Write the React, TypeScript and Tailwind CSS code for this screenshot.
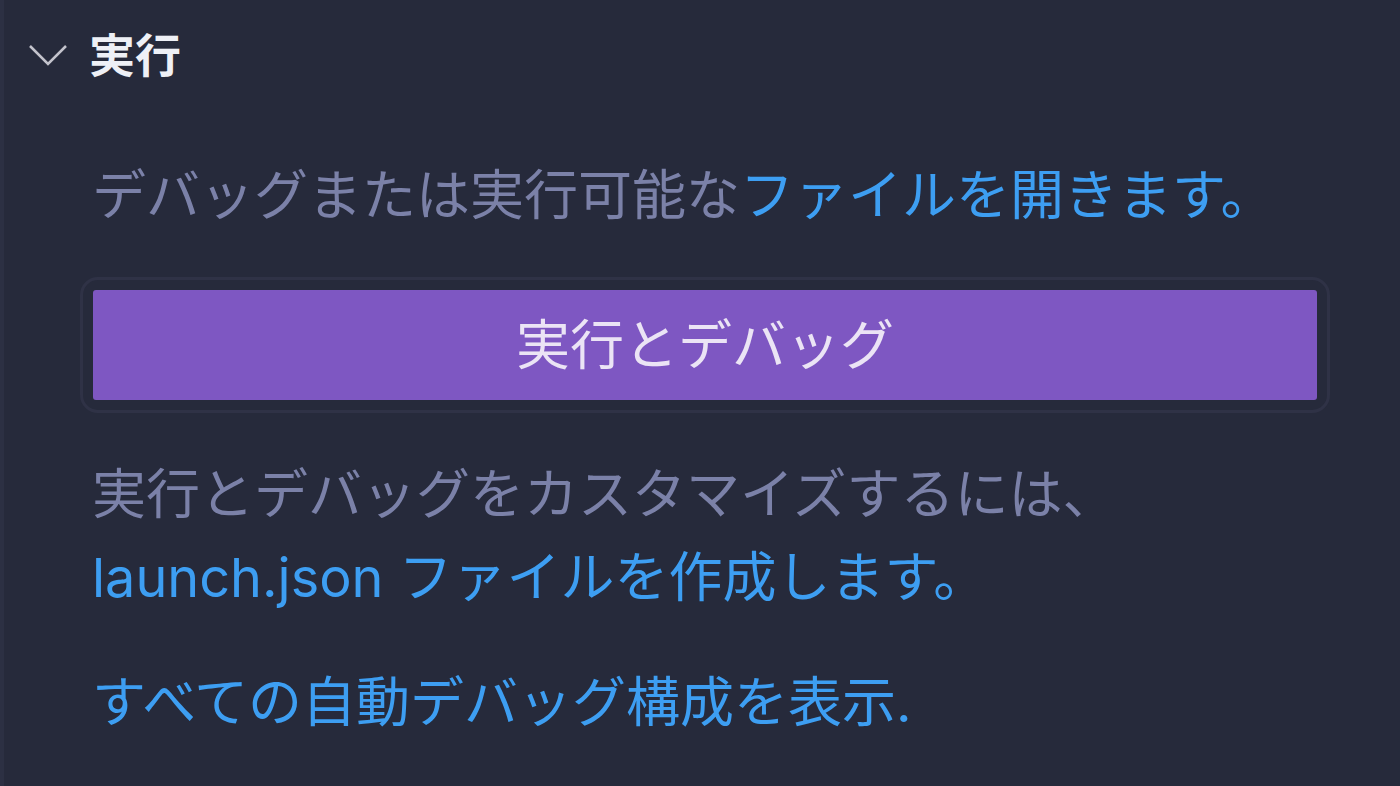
export default function App() {
  const font = { fontFamily: 'Inter, "Noto Sans CJK JP", sans-serif' };

  return (
    <div
      className="w-[1400px] h-[786px] overflow-hidden bg-[#262a3b] border-l-4 border-[#2c3043]"
      style={font}
    >
      <div className="flex items-center h-[110px] pl-[22px]">
        <svg width="44" height="28" viewBox="0 0 44 28" className="shrink-0">
          <polyline
            points="4,5 22,23 40,5"
            fill="none"
            stroke="#c3c3cc"
            strokeWidth="2.5"
          />
        </svg>
        <span className="ml-[19px] text-[46px] font-bold text-[#eef0f6] leading-none">実行</span>
      </div>

      <div className="pl-[88px]">
        <p className="mt-[44px] text-[54px] leading-[83px] text-[#7b81a8] whitespace-nowrap">
          デバッグまたは実行可能な<span className="text-[#3d9ef2]">ファイルを開きます。</span>
        </p>

        <div className="mt-[40px] -ml-[12px] w-[1250px] rounded-[18px] border-[3px] border-[#2f3246] p-[10px]">
          <button className="w-full h-[110px] rounded-[3px] bg-[#7e57c2] text-[54px] text-[#ebe4f5] flex items-center justify-center">
            実行とデバッグ
          </button>
        </div>

        <p className="mt-[40px] text-[54px] leading-[83px] text-[#7b81a8] whitespace-nowrap">
          実行とデバッグをカスタマイズするには、
          <br />
          <span className="text-[#3d9ef2]">launch.json ファイルを作成します。</span>
        </p>

        <p className="mt-[42px] text-[54px] leading-[83px] text-[#3d9ef2] whitespace-nowrap">
          すべての自動デバッグ構成を表示.
        </p>
      </div>
    </div>
  );
}
